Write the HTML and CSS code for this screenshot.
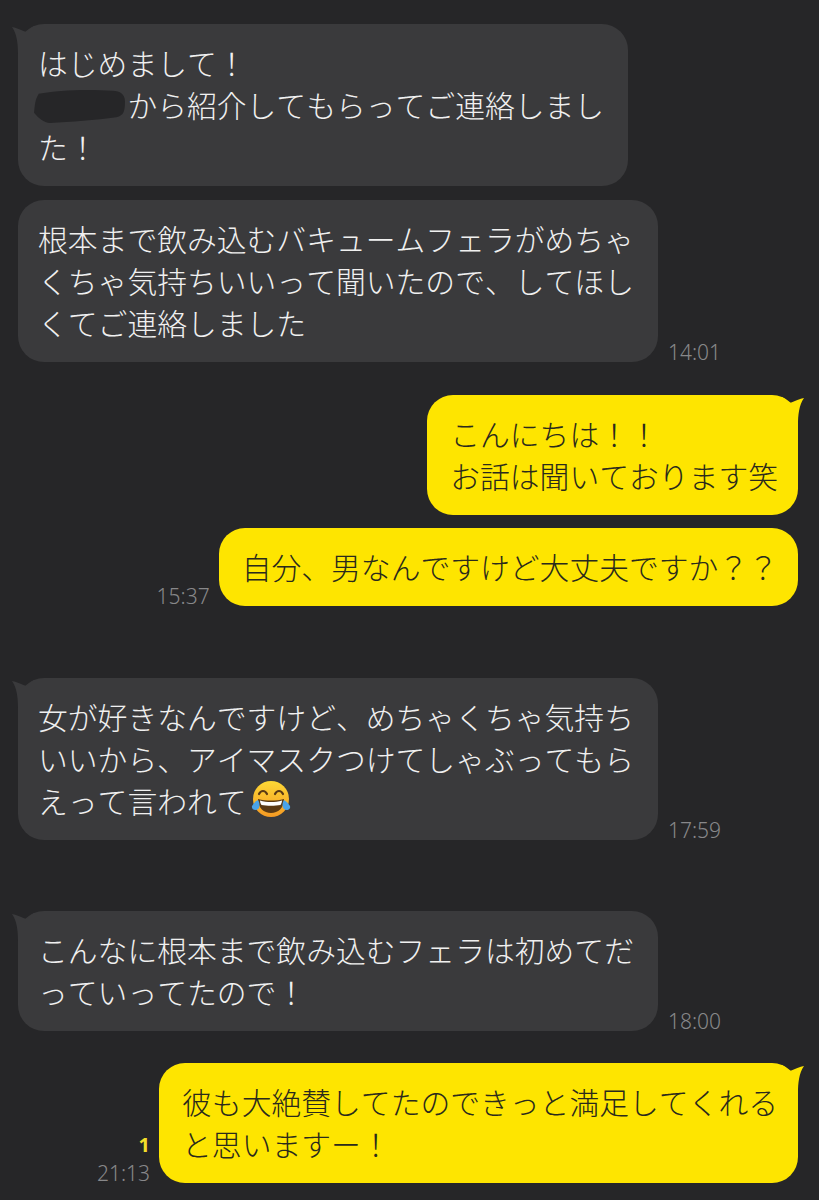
FILE: index.html
```html
<!DOCTYPE html>
<html lang="ja">
<head>
<meta charset="UTF-8" />
<meta name="viewport" content="width=device-width, initial-scale=1.0" />
<title>トーク</title>
<link rel="stylesheet" href="styles.css">
</head>
<body>
<main class="chat">

<div class="row row-in">
  <div class="bubble bubble-in">
    <svg class="tail tail-in" viewBox="0 0 30 30"><path d="M0 3 C4 3.500 9 6 14 8 C16 6.500 18 4 22 2 L22 30 L6 30 C6 20 5 10 0 3 Z" /></svg>
    はじめまして！<br />
    <span class="redact"><svg viewBox="0 0 98 38"><path d="M6 6 C26 2 60 1 84 3 C92 3 97 7 97 14 C97 24 96 29 88 31 C66 34 40 36 18 37 C11 36 6 32 1 26 C2 18 2 12 6 6 Z" /></svg></span>から紹介してもらってご連絡しまし<br />
    た！
  </div>
</div>

<div class="row row-in gap-14">
  <div class="bubble bubble-in">
    根本まで飲み込むバキュームフェラがめちゃ<br />
    くちゃ気持ちいいって聞いたので、してほし<br />
    くてご連絡しました
  </div>
  <div class="meta"><span class="time">14:01</span></div>
</div>

<div class="row row-out gap-33">
  <div class="bubble bubble-out">
    <svg class="tail tail-out" viewBox="0 0 30 30"><path d="M0 3 C4 3.500 9 6 14 8 C16 6.500 18 4 22 2 L22 30 L6 30 C6 20 5 10 0 3 Z" /></svg>
    こんにちは！！<br />
    お話は聞いております笑
  </div>
</div>

<div class="row row-out gap-13">
  <div class="meta"><span class="time">15:37</span></div>
  <div class="bubble bubble-out">自分、男なんですけど大丈夫ですか？？</div>
</div>

<div class="row row-in gap-72">
  <div class="bubble bubble-in">
    <svg class="tail tail-in" viewBox="0 0 30 30"><path d="M0 3 C4 3.500 9 6 14 8 C16 6.500 18 4 22 2 L22 30 L6 30 C6 20 5 10 0 3 Z" /></svg>
    女が好きなんですけど、めちゃくちゃ気持ち<br />
    いいから、アイマスクつけてしゃぶってもら<br />
    えって言われて<svg class="emoji" viewBox="0 0 40 40">
      <defs>
        <linearGradient id="face" x1="0" y1="0" x2="0" y2="1">
          <stop offset="0" stop-color="#fdd835" />
          <stop offset="1" stop-color="#f59a23" />
        </linearGradient>
      </defs>
      <circle cx="20" cy="20" r="18" fill="url(#face)" />
      <path d="M8 15 C10 11 14 11 16 15" fill="none" stroke="#5b3a14" stroke-width="2.2" stroke-linecap="round" />
      <path d="M24 15 C26 11 30 11 32 15" fill="none" stroke="#5b3a14" stroke-width="2.2" stroke-linecap="round" />
      <path d="M7 20 C15 22 25 22 33 20 C33 29 27 34 20 34 C13 34 7 29 7 20 Z" fill="#5b3a14" />
      <path d="M9 21.500 C16 23.500 24 23.500 31 21.500 C31 24 30 25 29.500 26 C24 27 16 27 10.500 26 C10 25 9 24 9 21.500 Z" fill="#fff" />
      <path d="M1 27 C3 24 5 22 7 21 C9 24 9 28 7 30 C5 32 0 31 1 27 Z" fill="#4aa3e8" />
      <path d="M39 27 C37 24 35 22 33 21 C31 24 31 28 33 30 C35 32 40 31 39 27 Z" fill="#4aa3e8" />
    </svg>
  </div>
  <div class="meta"><span class="time">17:59</span></div>
</div>

<div class="row row-in gap-71">
  <div class="bubble bubble-in">
    <svg class="tail tail-in" viewBox="0 0 30 30"><path d="M0 3 C4 3.500 9 6 14 8 C16 6.500 18 4 22 2 L22 30 L6 30 C6 20 5 10 0 3 Z" /></svg>
    こんなに根本まで飲み込むフェラは初めてだ<br />
    っていってたので！
  </div>
  <div class="meta"><span class="time">18:00</span></div>
</div>

<div class="row row-out gap-32">
  <div class="meta">
    <span class="unread">1</span>
    <span class="time">21:13</span>
  </div>
  <div class="bubble bubble-out">
    <svg class="tail tail-out" viewBox="0 0 30 30"><path d="M0 3 C4 3.500 9 6 14 8 C16 6.500 18 4 22 2 L22 30 L6 30 C6 20 5 10 0 3 Z" /></svg>
    彼も大絶賛してたのできっと満足してくれる<br />
    と思いますー！
  </div>
</div>

</main>
</body>
</html>
```

FILE: styles.css
```css
* {
  box-sizing: border-box;
}

body {
  margin: 0;
  background-color: #262628;
  font-family: "Noto Sans CJK JP", "Noto Sans", sans-serif;
}

.chat {
  display: flex;
  flex-direction: column;
  padding: 24px 21px 16px 18px;
}

.row {
  display: flex;
  align-items: flex-end;
}

.row-in {
  justify-content: flex-start;
  gap: 10px;
}

.row-out {
  justify-content: flex-end;
  gap: 9px;
}

.gap-13 {
  margin-top: 13px;
}

.gap-14 {
  margin-top: 14px;
}

.gap-32 {
  margin-top: 32px;
}

.gap-33 {
  margin-top: 33px;
}

.gap-71 {
  margin-top: 71px;
}

.gap-72 {
  margin-top: 72px;
}

.bubble {
  position: relative;
  border-radius: 26px;
  font-size: 29.8px;
  font-weight: 300;
  font-kerning: none;
  line-height: 42px;
  white-space: nowrap;
}

.bubble-in {
  padding: 17px 24px 19px 20px;
  background-color: #3a3a3c;
  color: #f0f0f0;
}

.bubble-out {
  padding: 17px 20px 19px 23px;
  background-color: #fee500;
  color: #2a2a1c;
}

/* little point at the top corner of the first bubble in a group */
.tail {
  position: absolute;
  top: 0;
  width: 30px;
  height: 30px;
}

.tail-in {
  left: -6px;
  fill: #3a3a3c;
}

.tail-out {
  right: -6px;
  fill: #fee500;
  transform: scaleX(-1);
}

.redact {
  position: relative;
  display: inline-block;
  width: 3em;
  height: 1em;
}

.redact svg {
  position: absolute;
  left: -7px;
  top: 1px;
  width: 97px;
  height: 36px;
  fill: #262628;
}

.emoji {
  width: 40px;
  height: 40px;
  margin: -8px 0 -8px 4px;
  vertical-align: 2px;
}

.meta {
  display: flex;
  flex-direction: column;
  align-items: flex-end;
}

.time {
  font-family: "Noto Sans", sans-serif;
  font-size: 21px;
  font-weight: 300;
  line-height: 20px;
  color: #88888a;
}

.unread {
  font-family: "Noto Sans", sans-serif;
  font-size: 20px;
  font-weight: 700;
  line-height: 20px;
  color: #f2de2a;
  margin-bottom: 8px;
}
```
